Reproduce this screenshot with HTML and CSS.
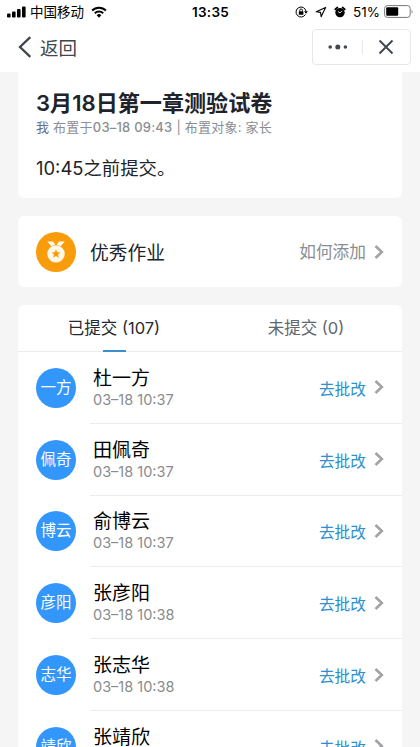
FILE: index.html
```html
<!DOCTYPE html>
<html lang="zh-CN">
<head>
<meta charset="utf-8">
<meta name="viewport" content="width=device-width, initial-scale=1">
<title>作业详情</title>
<link rel="stylesheet" href="styles.css">
</head>
<body>
<svg class="defs" width="0" height="0" aria-hidden="true">
  <symbol id="chevron" viewBox="0 0 10 16"><path d="M1.5 2l6.3 6-6.3 6" fill="none" stroke="currentColor" stroke-width="2.6"/></symbol>
</svg>
<header class="top">
  <div class="status">
    <div class="status-left">
      <svg class="signal" width="19" height="12" viewBox="0 0 19 12"><rect x="0" y="7.5" width="3.6" height="4" rx="1"/><rect x="5" y="5.5" width="3.6" height="6" rx="1"/><rect x="10" y="3" width="3.6" height="8.5" rx="1"/><rect x="15" y="0.5" width="3.6" height="11" rx="1"/></svg>
      <span class="carrier">中国移动</span>
      <svg class="wifi" width="16" height="12" viewBox="0 0 16 12"><g fill="none" stroke="#000" stroke-width="2"><path d="M1.1 4.5a9.8 9.8 0 0 1 13.8 0"/><path d="M3.8 7.3a6 6 0 0 1 8.4 0"/></g><path d="M8 11.7L5.7 9.3a3.2 3.2 0 0 1 4.6 0z"/></svg>
    </div>
    <span class="clock">13:35</span>
    <div class="status-right">
      <svg width="13" height="12" viewBox="0 0 13 12"><path d="M10.4 8.5a5 5 0 1 1 .6-3.2" fill="none" stroke="#000"/><path d="M9 5.3h4l-2 2.5z"/><rect x="3.8" y="5.2" width="4.6" height="3.5" rx=".5"/><path d="M4.8 5.5V4.3a1.3 1.3 0 0 1 2.6 0v1.2" fill="none" stroke="#000" stroke-width=".9"/></svg>
      <svg width="12" height="12" viewBox="0 0 12 12"><path d="M10.6 1.4L1.2 5.8l4.4.6.5 4.4z" fill="none" stroke="#000" stroke-width="1.1" stroke-linejoin="round"/></svg>
      <svg width="12" height="12" viewBox="0 0 12 12"><circle cx="6" cy="6.6" r="4.7"/><path d="M1.3 3.4a7 7 0 0 1 2.1-1.9M10.7 3.4a7 7 0 0 0-2.1-1.9" fill="none" stroke="#000" stroke-width="1.8" stroke-linecap="round"/><path d="M3.9 5.4L6 7l2-2.2" fill="none" stroke="#fff" stroke-width=".9"/></svg>
      <span class="percent">51%</span>
      <svg class="battery" width="30" height="13" viewBox="0 0 30 13"><rect x=".6" y=".6" width="25.6" height="11.8" rx="2.8" fill="#fff" stroke="#777"/><rect x="2.2" y="2.2" width="12" height="8.6" rx="1"/><path d="M27.7 4.5q1.7 2 0 4z" fill="#777"/></svg>
    </div>
  </div>
  <nav class="nav">
    <a class="back"><svg width="14" height="22" viewBox="0 0 14 22"><path d="M12.3 1.2L2 11l10.3 9.8" fill="none" stroke="#40464d" stroke-width="2.3"/></svg><span>返回</span></a>
    <div class="capsule">
      <svg width="20" height="8" viewBox="0 0 20 8"><circle cx="2.2" cy="4" r="1.8"/><circle cx="9.8" cy="4" r="2.5"/><circle cx="17.4" cy="4" r="1.8"/></svg>
      <i class="divider"></i>
      <svg width="16" height="16" viewBox="0 0 16 16"><path d="M1.5 1.5l13 13M14.5 1.5l-13 13" stroke="#40464d" stroke-width="1.9"/></svg>
    </div>
  </nav>
</header>
<main>
  <section class="card summary">
    <h1>3月18日第一章测验试卷</h1>
    <p class="meta"><span class="author">我</span> 布置于<b>03–18 09:43</b> | 布置对象: 家长</p>
    <p class="content">10:45之前提交。</p>
  </section>
  <section class="card excellent">
    <span class="medal"><svg width="20" height="24" viewBox="0 0 20 24"><path d="M1.2 1.6h6l2 3.2-3.8 1.4z M18.8 1.6h-6l-2 3.2 3.8 1.4z" fill="#fff8e8"/><circle cx="10" cy="13.9" r="8.7" fill="#fff8e8"/><path d="M10 9.3l1.3 2.9 3.1.3-2.3 2.1.7 3.1-2.8-1.6-2.8 1.6.7-3.1-2.3-2.1 3.1-.3z" fill="#f99c0c"/></svg></span>
    <span class="excellent-title">优秀作业</span>
    <span class="hint">如何添加</span>
    <svg class="arrow"><use href="#chevron"/></svg>
  </section>
  <section class="card submissions">
    <div class="tabs"><div class="tab active">已提交 (107)</div><div class="tab">未提交 (0)</div></div>
    <ul>
      <li><span class="avatar">一方</span><div class="row"><div class="who"><span class="name">杜一方</span><time>03–18 10:37</time></div><a class="review">去批改</a><svg class="arrow"><use href="#chevron"/></svg></div></li>
      <li><span class="avatar">佩奇</span><div class="row"><div class="who"><span class="name">田佩奇</span><time>03–18 10:37</time></div><a class="review">去批改</a><svg class="arrow"><use href="#chevron"/></svg></div></li>
      <li><span class="avatar">博云</span><div class="row"><div class="who"><span class="name">俞博云</span><time>03–18 10:37</time></div><a class="review">去批改</a><svg class="arrow"><use href="#chevron"/></svg></div></li>
      <li><span class="avatar">彦阳</span><div class="row"><div class="who"><span class="name">张彦阳</span><time>03–18 10:38</time></div><a class="review">去批改</a><svg class="arrow"><use href="#chevron"/></svg></div></li>
      <li><span class="avatar">志华</span><div class="row"><div class="who"><span class="name">张志华</span><time>03–18 10:38</time></div><a class="review">去批改</a><svg class="arrow"><use href="#chevron"/></svg></div></li>
      <li><span class="avatar">靖欣</span><div class="row"><div class="who"><span class="name">张靖欣</span><time>03–18 10:38</time></div><a class="review">去批改</a><svg class="arrow"><use href="#chevron"/></svg></div></li>
    </ul>
  </section>
</main>
</body>
</html>
```
FILE: styles.css
```css
* { box-sizing: border-box; margin: 0; padding: 0; }
html, body { height: 747px; overflow: hidden; }
body { background: #f5f5f5; color: #202329; font-family: Inter, "Noto Sans CJK SC", sans-serif; }
svg { display: block; flex: none; }
.defs { position: absolute; }
.top { height: 72px; background: #fff; }
.status { height: 23px; display: grid; grid-template-columns: 1fr auto 1fr; align-items: center; padding: 0 6px 0 7px; color: #000; }
.status-left, .status-right { display: flex; align-items: center; }
.status-right { justify-content: flex-end; gap: 7px; }
.carrier { font-size: 13.5px; margin: 0 7px 0 4px; line-height: 22px; }
.clock { font-size: 13.5px; font-weight: 600; letter-spacing: .3px; }
.percent { font-size: 13.5px; margin-right: -3px; }
.nav { height: 49px; display: flex; justify-content: space-between; align-items: flex-start; padding: 6px 9px 0 18px; }
.back { display: flex; align-items: center; gap: 8px; height: 36px; font-size: 18.5px; color: #40464d; }
.capsule { width: 99px; height: 36px; border: 1px solid #e6e7e9; border-radius: 4px; display: flex; align-items: center; padding: 0 16px 0 15px; justify-content: space-between; fill: #40464d; }
.divider { width: 1px; height: 14px; background: #e6e7e9; margin-left: -1px; }
main { padding: 0 18px; display: flex; flex-direction: column; gap: 18px; }
.card { background: #fff; border-radius: 6px; }
.summary { height: 126px; border-radius: 0 0 6px 6px; padding: 16px 18px 0; white-space: nowrap; }
h1 { font-size: 22.1px; line-height: 30px; font-weight: 600; }
.meta { font-size: 13px; line-height: 18px; color: #8b8e94; letter-spacing: .22px; }
.meta b { font-weight: 500; }
.author { color: #626f8b; }
.content { font-size: 18.4px; line-height: 28px; margin-top: 18px; }
.excellent { height: 71px; display: flex; align-items: center; padding: 0 18px; }
.medal { width: 40px; height: 40px; border-radius: 50%; background: #f99c0c; display: grid; place-items: center; margin-right: 14px; }
.excellent-title { font-size: 18.8px; flex: 1; }
.hint { font-size: 16.7px; line-height: 24px; padding-top: 1px; color: #8a8d92; }
.arrow { width: 10px; height: 16px; color: #a2a3a6; margin-left: 8px; }
.submissions { height: 442px; border-radius: 6px 6px 0 0; overflow: hidden; }
.tabs { height: 47px; display: grid; grid-template-columns: 1fr 1fr; border-bottom: 1px solid #ececed; font-size: 16.5px; text-align: center; line-height: 46px; color: #63666b; }
.active { color: #26292f; }
.active::after { content: ""; display: block; width: 23px; height: 2px; margin: -1px auto 0; background: #3c8ed1; }
ul { list-style: none; }
li { height: 71.8px; display: flex; align-items: center; padding-left: 18px; }
.avatar { width: 40px; height: 40px; border-radius: 50%; background: #3396fb; color: #fff; font-size: 15.5px; line-height: 40px; text-align: center; }
.row { flex: 1; height: 100%; margin-left: 14px; padding: 0 18px 0 3px; border-bottom: 1px solid #ececed; display: flex; align-items: center; }
.who { flex: 1; padding-top: 1px; }
.name { display: block; color: #000; font-size: 19px; line-height: 24px; }
time { display: block; color: #8a8b8e; font-size: 14.5px; line-height: 18px; }
.review { color: #2c8fd0; font-size: 15.7px; padding-top: 2px; }
```
